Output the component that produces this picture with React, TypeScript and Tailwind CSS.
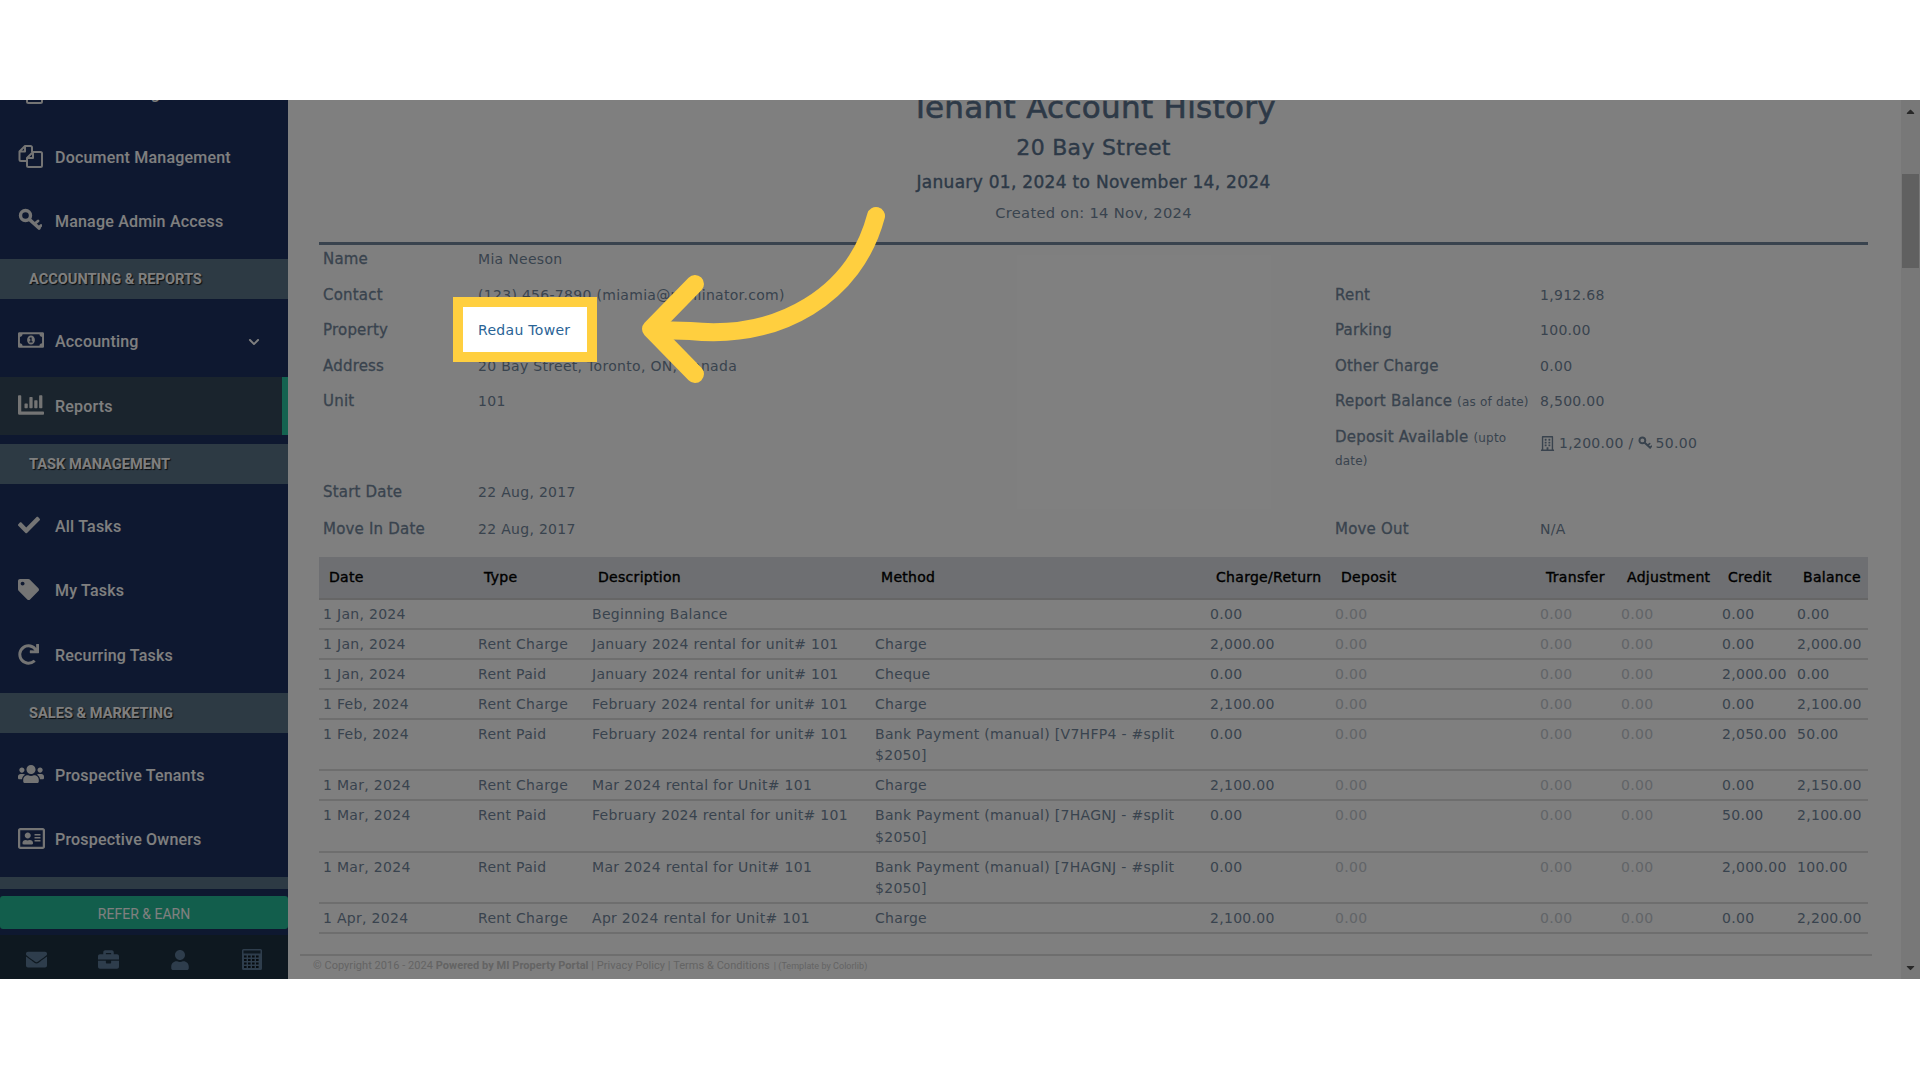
import { FaBriefcase, FaRegBuilding, FaCheck, FaChevronDown, FaEnvelope, FaRedo, FaRegAddressCard, FaRegMoneyBillAlt, FaChartBar, FaTag, FaUser, FaUsers, FaCaretUp, FaCaretDown } from 'react-icons/fa'
import type { ReactNode } from 'react'

const rows = [
  ['1 Jan, 2024', '', 'Beginning Balance', '', '0.00', '0.00', '0.00', '0.00', '0.00', '0.00'],
  ['1 Jan, 2024', 'Rent Charge', 'January 2024 rental for unit# 101', 'Charge', '2,000.00', '0.00', '0.00', '0.00', '0.00', '2,000.00'],
  ['1 Jan, 2024', 'Rent Paid', 'January 2024 rental for unit# 101', 'Cheque', '0.00', '0.00', '0.00', '0.00', '2,000.00', '0.00'],
  ['1 Feb, 2024', 'Rent Charge', 'February 2024 rental for unit# 101', 'Charge', '2,100.00', '0.00', '0.00', '0.00', '0.00', '2,100.00'],
  ['1 Feb, 2024', 'Rent Paid', 'February 2024 rental for unit# 101', 'Bank Payment (manual) [V7HFP4 - #split $2050]', '0.00', '0.00', '0.00', '0.00', '2,050.00', '50.00'],
  ['1 Mar, 2024', 'Rent Charge', 'Mar 2024 rental for Unit# 101', 'Charge', '2,100.00', '0.00', '0.00', '0.00', '0.00', '2,150.00'],
  ['1 Mar, 2024', 'Rent Paid', 'February 2024 rental for unit# 101', 'Bank Payment (manual) [7HAGNJ - #split $2050]', '0.00', '0.00', '0.00', '0.00', '50.00', '2,100.00'],
  ['1 Mar, 2024', 'Rent Paid', 'Mar 2024 rental for Unit# 101', 'Bank Payment (manual) [7HAGNJ - #split $2050]', '0.00', '0.00', '0.00', '0.00', '2,000.00', '100.00'],
  ['1 Apr, 2024', 'Rent Charge', 'Apr 2024 rental for Unit# 101', 'Charge', '2,100.00', '0.00', '0.00', '0.00', '0.00', '2,200.00'],
]

const headers = ['Date', 'Type', 'Description', 'Method', 'Charge/Return', 'Deposit', 'Transfer', 'Adjustment', 'Credit', 'Balance']

function FilesIcon() {
  return (
    <svg width="25" height="24" viewBox="0 0 25 24" fill="none" stroke="currentColor" strokeWidth="2" strokeLinejoin="round">
      <path d="M9 17H3a1.5 1.5 0 0 1-1.5-1.5V7.500L7 2h5.500A1.500 1.500 0 0 1 14 3.500V8" />
      <path d="M7 2v5.500H1.500" />
      <path d="M15 8h7.500A1.500 1.500 0 0 1 24 9.500v12a1.500 1.500 0 0 1-1.500 1.500h-12A1.500 1.500 0 0 1 9 21.500V14z" />
      <path d="M15 8v6H9" />
    </svg>
  )
}

function KeyIcon({ size = 24 }: { size?: number }) {
  return (
    <svg width={size} height={size} viewBox="0 0 24 24" fill="none" stroke="currentColor" strokeLinecap="round">
      <circle cx="7.500" cy="7.500" r="5" strokeWidth="3.400" />
      <path d="M11.500 11.500L21 20" strokeWidth="3.600" />
      <path d="M17 15.500l3-2.500M21 19.500l2-2" strokeWidth="2.800" />
    </svg>
  )
}

function CalcIcon() {
  return (
    <svg width="20" height="21" viewBox="0 0 20 21" fill="currentColor">
      <path d="M1.500 0h17A1.500 1.500 0 0 1 20 1.500v18a1.500 1.500 0 0 1-1.500 1.500h-17A1.500 1.500 0 0 1 0 19.500v-18A1.500 1.500 0 0 1 1.500 0zM1.500 1.500v3h17v-3z" fillRule="evenodd" />
      <g fill="#0e1820">
        {[6.500, 10, 13.500, 17].map(y =>
          [2, 6, 10, 14].map(x => <rect key={`${x}-${y}`} x={x} y={y} width="2.600" height="2" />)
        )}
      </g>
    </svg>
  )
}

function NavItem({ icon, label, chevron, className = '' }: { icon: ReactNode; label: string; chevron?: boolean; className?: string }) {
  return (
    <div className={`flex h-16 items-center pl-[18px] pr-[28px] text-white ${className}`}>
      <span className="mb-[4px] flex w-[37px] shrink-0 items-center text-[#e8e8e8]">{icon}</span>
      <span className="flex-1 text-[16px] font-medium tracking-[0.2px]">{label}</span>
      {chevron && <FaChevronDown size={12} />}
    </div>
  )
}

function SectionHead({ label, className }: { label: string; className: string }) {
  return (
    <div className={`flex h-10 items-center bg-[#5a7489] pl-[29px] pt-[2px] text-[14.6px] font-bold text-white [text-shadow:1px_1px_1px_rgba(0,0,0,0.8)] ${className}`}>
      {label}
    </div>
  )
}

function Sidebar() {
  return (
    <aside className="flex h-full w-[288px] shrink-0 flex-col overflow-hidden bg-[#1c3160] font-['Roboto',sans-serif]">
      <div className="-mt-[38px]">
        <NavItem icon={<FilesIcon />} label="Tenant Management" />
        <NavItem icon={<FilesIcon />} label="Document Management" />
        <NavItem icon={<KeyIcon />} label="Manage Admin Access" />
        <SectionHead label="ACCOUNTING & REPORTS" className="mt-[5px]" />
        <NavItem icon={<FaRegMoneyBillAlt size={26} />} label="Accounting" chevron className="mt-[11px]" />
        <div className="mt-[3px] flex h-[58px] items-center border-r-[6px] border-[#28c6a0] bg-[#34485a] pl-[18px] pt-[2px] text-white">
          <span className="mb-[4px] flex w-[37px] items-center text-[#e8e8e8]"><FaChartBar size={26} /></span>
          <span className="text-[16px] font-medium tracking-[0.2px]">Reports</span>
        </div>
        <SectionHead label="TASK MANAGEMENT" className="mt-[9px]" />
        <NavItem icon={<FaCheck size={22} />} label="All Tasks" className="mt-[11px]" />
        <NavItem icon={<FaTag size={21} />} label="My Tasks" />
        <NavItem icon={<FaRedo size={21} />} label="Recurring Tasks" className="mt-[1px]" />
        <SectionHead label="SALES & MARKETING" className="mt-[5px]" />
        <NavItem icon={<FaUsers size={26} />} label="Prospective Tenants" className="mt-[11px]" />
        <NavItem icon={<FaRegAddressCard size={27} />} label="Prospective Owners" />
        <div className="mt-[5px] h-3 bg-[#5a7489]" />
        <div className="mt-[7px] flex h-[33px] items-center justify-center rounded-[3px] bg-[#25bc98] pt-[3px] text-[14px] text-white">REFER &amp; EARN</div>
        <div className="mt-[6px] grid h-[44px] grid-cols-4 items-center justify-items-center bg-[#1c3040] pt-[5px] text-[#5c7a98]">
          <FaEnvelope size={21} />
          <FaBriefcase size={21} />
          <FaUser size={20} />
          <CalcIcon />
        </div>
      </div>
    </aside>
  )
}

function Label({ children }: { children: ReactNode }) {
  return <div className="pt-[9px] text-[15px] leading-5 tracking-[0.2px] [-webkit-text-stroke:0.3px]">{children}</div>
}

function Value({ children }: { children?: ReactNode }) {
  return <div className="pt-[9px] leading-5">{children}</div>
}

function Small({ children }: { children: ReactNode }) {
  return <span className="text-[12px] [-webkit-text-stroke:0]">{children}</span>
}

function InfoGrid() {
  return (
    <div className="-mt-[5px] grid grid-cols-[155px_857px_205px_1fr] grid-rows-[35.5px_35.5px_35.5px_35.5px_35.5px_55px_37px_36px] pl-[4px]">
      <Label>Name</Label><Value>Mia Neeson</Value><div /><div />
      <Label>Contact</Label><Value>(123) 456-7890 (miamia@mailinator.com)</Value><Label>Rent</Label><Value>1,912.68</Value>
      <Label>Property</Label><Value>&nbsp;</Value><Label>Parking</Label><Value>100.00</Value>
      <Label>Address</Label><Value>20 Bay Street, Toronto, ON, Canada</Value><Label>Other Charge</Label><Value>0.00</Value>
      <Label>Unit</Label><Value>101</Value><Label>Report Balance <Small>(as of date)</Small></Label><Value>8,500.00</Value>
      <div /><div />
      <div className="pr-2 pt-2 text-[15px] leading-[22px] tracking-[0.2px] [-webkit-text-stroke:0.3px]">Deposit Available <Small>(upto date)</Small></div>
      <div className="flex h-[44px] items-center gap-[4px] self-start pt-[7px]">
        <FaRegBuilding size={15} />
        <span>1,200.00 /</span>
        <KeyIcon size={14} />
        <span>50.00</span>
      </div>
      <Label>Start Date</Label><Value>22 Aug, 2017</Value><div /><div />
      <Label>Move In Date</Label><Value>22 Aug, 2017</Value><Label>Move Out</Label><Value>N/A</Value>
    </div>
  )
}

function LedgerTable() {
  return (
    <table className="mt-[11px] w-[1549px] table-fixed border-collapse">
      <colgroup>
        <col className="w-[155px]" />
        <col className="w-[114px]" />
        <col className="w-[283px]" />
        <col className="w-[335px]" />
        <col className="w-[125px]" />
        <col className="w-[205px]" />
        <col className="w-[81px]" />
        <col className="w-[101px]" />
        <col className="w-[75px]" />
        <col className="w-[75px]" />
      </colgroup>
      <thead>
        <tr className="h-[42px] border-b-2 border-[#ccc] bg-[#dcdfe4]">
          {headers.map(h => (
            <th key={h} className="whitespace-nowrap pl-[10px] text-left font-normal tracking-[0.3px] text-black [-webkit-text-stroke:0.4px]">{h}</th>
          ))}
        </tr>
      </thead>
      <tbody>
        {rows.map((row, i) => (
          <tr key={i} className="border-b-2 border-[#ddd]">
            {row.map((cell, j) => (
              <td
                key={j}
                className={`px-[4px] pb-[2.5px] pt-[4px] align-top leading-[21.5px] ${j === 5 || j === 6 || j === 7 ? 'text-[#c3c9d0]' : ''}`}
              >
                {cell}
              </td>
            ))}
          </tr>
        ))}
      </tbody>
    </table>
  )
}

function Scrollbar() {
  return (
    <div className="flex h-full w-[19px] shrink-0 flex-col items-center bg-[#f1f1f1] text-[#505050]">
      <FaCaretUp size={13} className="mt-[5px]" />
      <div className="mt-[56px] h-[94px] w-[17px] bg-[#c1c1c1]" />
      <div className="flex-1" />
      <FaCaretDown size={13} className="mb-[5px]" />
    </div>
  )
}

export default function App() {
  return (
    <div className="h-[1080px] overflow-hidden bg-white pt-[100px]">
      <div className="relative flex h-[879px] overflow-hidden">
        <Sidebar />
        <main className="flex min-w-0 flex-1 flex-col overflow-hidden bg-white font-['DejaVu_Sans',sans-serif] text-[14px] tracking-[0.3px] text-[#73879c]">
          <div className="-mt-[13px] h-[867px] shrink-0 pl-[31px] pr-[33px]">
            <div className="text-center text-[#5a738e]">
              <div className="h-10 text-[31px] leading-10 [-webkit-text-stroke:0.6px]">Tenant Account History</div>
              <div className="h-[42px] text-[22px] leading-[42px] [-webkit-text-stroke:0.4px]">20 Bay Street</div>
              <div className="h-[26px] text-[17px] leading-[26px] [-webkit-text-stroke:0.4px]">January 01, 2024 to November 14, 2024</div>
              <div className="h-[34px] pt-[1px] text-[14.7px] leading-[34px] text-[#73879c]">Created on: 14 Nov, 2024</div>
            </div>
            <div className="mt-[13px] border-b-[3px] border-[#73879c]" />
            <InfoGrid />
            <LedgerTable />
          </div>
          <div className="ml-[12px] mr-[29px] flex h-[25px] shrink-0 items-center border-t-2 border-[#ddd] pb-[2px] pl-[13px] font-['Roboto',sans-serif] text-[11px] tracking-[0.04px] text-[#c8c8c8]">
            © Copyright 2016 - 2024&nbsp;<b className="font-bold">Powered by MI Property Portal</b>&nbsp;| Privacy Policy | Terms &amp; Conditions <span className="ml-1 text-[9px]">| (Template by Colorlib)</span>
          </div>
        </main>
        <Scrollbar />

        <div className="absolute inset-0 bg-black/50" />

        <div className="absolute left-[453px] top-[197px] flex h-[65px] w-[144px] items-center border-[10px] border-[#ffcf3f] bg-white pl-[15px] pt-[1px] font-['DejaVu_Sans',sans-serif] text-[14px] tracking-[0.3px] text-[#2a6496]">
          Redau Tower
        </div>
        <svg className="absolute left-0 top-0" width="1000" height="400" viewBox="0 100 1000 400" fill="none">
          <path d="M876 216C855 295 780 340 690 331L655 330" stroke="#ffcf3f" strokeWidth="18" strokeLinecap="round" />
          <path d="M695 284L651 329L695 374" stroke="#ffcf3f" strokeWidth="18" strokeLinecap="round" strokeLinejoin="round" />
        </svg>
      </div>
    </div>
  )
}
